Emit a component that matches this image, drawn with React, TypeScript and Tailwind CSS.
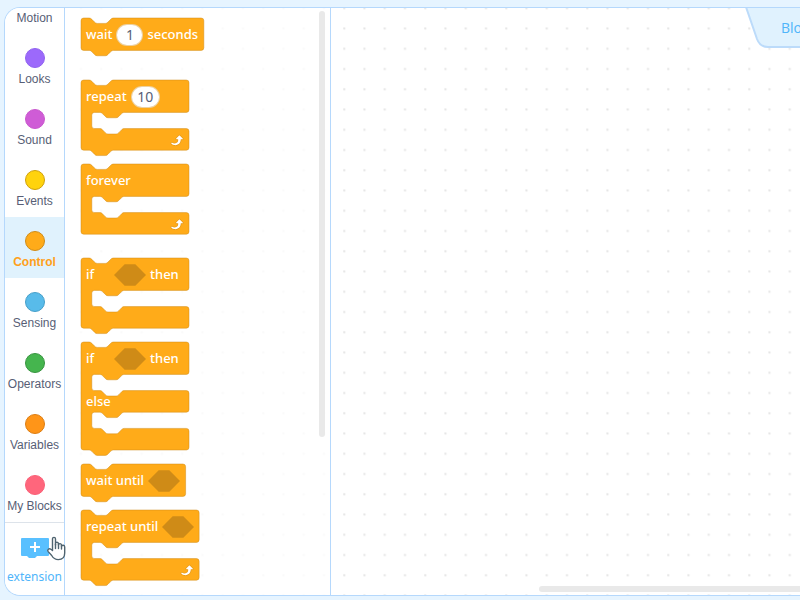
import { ReactNode, useState } from 'react';

const NOTCH_IN = 'c2,0 3,1 4,2 l4,4 c1,1 2,2 4,2 h12 c2,0 3,-1 4,-2 l4,-4 c1,-1 2,-2 4,-2';
const NOTCH_OUT = 'c-2,0 -3,1 -4,2 l-4,4 c-1,1 -2,2 -4,2 h-12 c-2,0 -3,-1 -4,-2 l-4,-4 c-1,-1 -2,-2 -4,-2';
const MOUTH = `H64 ${NOTCH_OUT} h-8 a4,4 0 0,0 -4,4 v16 a4,4 0 0,0 4,4 h8 ${NOTCH_IN}`;

// Outline of a block in grid units; `arms` are the heights of the bars below each mouth.
function outline(width: number, arms: number[], cap: boolean) {
  const right = width - 4;
  let d = `M0,4 A4,4 0 0,1 4,0 H12 ${NOTCH_IN} H${right} a4,4 0 0,1 4,4 v40 a4,4 0 0,1 -4,4 `;
  for (const arm of arms) {
    d += `${MOUTH} H${right} a4,4 0 0,1 4,4 v${arm - 8} a4,4 0 0,1 -4,4 `;
  }
  if (!cap) d += `H48 ${NOTCH_OUT} `;
  return d + 'H4 a4,4 0 0,1 -4,-4 z';
}

function LoopArrow() {
  return (
    <svg viewBox="0 0 24 24" className="size-4" aria-hidden="true">
      <path
        fill="#cf8b17"
        fillOpacity="0.6"
        d="M23.3,11c-0.3,0.6-0.9,1-1.5,1h-1.6c-0.1,1.3-0.5,2.5-1.1,3.6c-0.9,1.7-2.3,3.2-4.1,4.1c-1.7,0.9-3.6,1.2-5.5,0.9c-1.8-0.3-3.5-1.1-4.9-2.3c-0.7-0.7-0.7-1.9,0-2.6c0.6-0.6,1.6-0.7,2.3-0.2H7c0.9,0.6,1.9,0.9,2.9,0.9s1.9-0.3,2.7-0.9c1.1-0.8,1.8-2.1,1.8-3.5h-1.5c-0.9,0-1.7-0.7-1.7-1.7c0-0.4,0.2-0.9,0.5-1.2l4.4-4.4c0.7-0.6,1.7-0.6,2.4,0L23,9.2C23.5,9.7,23.6,10.4,23.3,11z"
      />
      <path
        fill="#fff"
        d="M21.8,11h-2.6c0,1.5-0.3,2.9-1,4.2c-0.8,1.6-2.1,2.8-3.7,3.6c-1.5,0.8-3.3,1.1-4.9,0.8c-1.6-0.2-3.2-1-4.4-2.1c-0.4-0.3-0.4-0.9-0.1-1.2c0.3-0.4,0.9-0.4,1.2-0.1l0,0c1,0.7,2.2,1.1,3.4,1.1s2.3-0.3,3.3-1c0.9-0.6,1.6-1.5,2-2.6c0.3-0.9,0.4-1.8,0.2-2.8h-2.4c-0.4,0-0.7-0.3-0.7-0.7c0-0.2,0.1-0.3,0.2-0.4l4.4-4.4c0.3-0.3,0.7-0.3,0.9,0L22,9.8c0.3,0.3,0.4,0.6,0.3,0.9S22,11,21.8,11z"
      />
    </svg>
  );
}

function Hexagon() {
  return (
    <svg viewBox="0 0 48 32" className="h-[22px] w-8 shrink-0" aria-hidden="true">
      <path d="M16,0 H32 L48,16 32,32 H16 L0,16 z" fill="#cf8b17" />
    </svg>
  );
}

function NumberSlot({ value, label }: { value: string; label: string }) {
  return (
    <input
      aria-label={label}
      defaultValue={value}
      className={`h-[22px] rounded-full border border-[#cf8b17]/40 bg-white text-center text-sm font-normal text-[#575e75] outline-none ${
        value.length > 1 ? 'w-[29px]' : 'w-[27px]'
      }`}
    />
  );
}

type BlockProps = {
  width: number;
  arms?: number[];
  cap?: boolean;
  loop?: boolean;
  otherwise?: string;
  className?: string;
  children: ReactNode;
};

function Block({ width, arms = [], cap = false, loop = false, otherwise, className = '', children }: BlockProps) {
  const units = 48 + arms.reduce((sum, arm) => sum + arm + 24, 0);
  return (
    <div className={`relative w-fit ${className}`}>
      <svg
        className="absolute top-0 left-0 overflow-visible"
        width={width * 0.675}
        height={units * 0.675}
        viewBox={`0 0 ${width} ${units}`}
        aria-hidden="true"
      >
        <path d={outline(width, arms, cap)} fill="#ffab19" stroke="#cf8b17" strokeOpacity="0.7" />
      </svg>
      <div className="relative" style={{ width: width * 0.675 }}>
        <div className="flex h-[33px] items-center gap-1 pl-[5px]">{children}</div>
        {arms.map((_, i) => (
          <div key={i} className="flex h-[38px] items-end justify-end pr-[5px] pb-[3px]">
            {otherwise && i === 0 && <span className="mr-auto pb-px pl-[5px] leading-4">{otherwise}</span>}
            {loop && <LoopArrow />}
          </div>
        ))}
      </div>
    </div>
  );
}

const categories = [
  { name: 'Motion', color: 'border-[#4280d7] bg-[#4c97ff]' },
  { name: 'Looks', color: 'border-[#9063f0] bg-[#9c69fb]' },
  { name: 'Sound', color: 'border-[#c957cd] bg-[#cf5cd6]' },
  { name: 'Events', color: 'border-[#cfa00c] bg-[#ffd30d]' },
  { name: 'Control', color: 'border-[#cf8b17] bg-[#ffab19]' },
  { name: 'Sensing', color: 'border-[#469fc9] bg-[#58bbea]' },
  { name: 'Operators', color: 'border-[#389440] bg-[#45b54e]' },
  { name: 'Variables', color: 'border-[#dc7d12] bg-[#ff9518]' },
  { name: 'My Blocks', color: 'border-[#fa6077] bg-[#ff667c]' },
];

function HandCursor() {
  return (
    <svg
      viewBox="0 0 18 25"
      className="pointer-events-none absolute top-[13px] left-[42px] h-[25px] w-[18px] overflow-visible"
      fill="#fff"
      stroke="#4f6470"
      strokeWidth="1.4"
      strokeLinejoin="round"
      strokeLinecap="round"
      aria-hidden="true"
    >
      <path d="M5.5,14.5 V3 C5.5,0.8 8.5,0.8 8.5,3 V9 V7.5 C8.5,5.6 11.5,5.8 11.5,7.8 V9 C11.8,7 14.5,7.4 14.5,9.2 V10.2 C15,8.6 17.7,9 17.7,11 V17 C17.7,21.5 15,23.6 11.3,23.6 C7.5,23.6 6,21.8 4.7,19.5 L1.2,15.6 C-0.2,13.8 2.2,12 3.8,13.2 z" />
      <path d="M8.5,8 V12.5 M11.5,8.5 V12.5 M14.5,9.8 V13" fill="none" />
    </svg>
  );
}

export default function App() {
  const [active, setActive] = useState('Control');
  return (
    <div className="h-screen min-h-[400px] overflow-hidden bg-[#e6f4ff] pt-[7px] pb-1 pl-1">
      <main className="relative flex h-full overflow-hidden rounded-l-2xl border border-r-0 border-[#b5d8fc] bg-white font-['Liberation_Sans',Arial,sans-serif]">
        <svg className="absolute inset-0 size-full" aria-hidden="true">
          <defs>
            <pattern id="grid" x="6.25" y="10.5" width="20.25" height="20.25" patternUnits="userSpaceOnUse">
              <rect x="8" y="9" width="2" height="2" fill="#e4e4e4" />
            </pattern>
          </defs>
          <rect width="100%" height="100%" fill="url(#grid)" />
        </svg>

        <nav className="relative z-10 flex w-[60px] shrink-0 flex-col border-r border-[#b5d8fc] bg-white" aria-label="Categories">
          <div className="flex min-h-0 flex-1 flex-col justify-end overflow-hidden">
            {categories.map(({ name, color }) => (
              <button
                key={name}
                onClick={() => setActive(name)}
                className={`flex h-[61px] w-full shrink-0 flex-col items-center gap-[3px] pt-[14px] text-xs leading-4 whitespace-nowrap ${
                  active === name ? 'bg-[#e0f2fd] font-bold text-[#ffa01a]' : 'text-[#575e75]'
                }`}
              >
                <span className={`size-5 shrink-0 rounded-full border ${color}`} />
                {name}
              </button>
            ))}
          </div>
          <button className="relative flex h-[73px] w-full shrink-0 flex-col items-center border-t border-[#dde3ea] pt-[15px] font-['Noto_Sans',sans-serif] text-xs leading-4 text-[#4fb5fa]">
            <svg viewBox="0 0 28 21" className="mb-[10px] h-[21px] w-7 shrink-0" aria-hidden="true">
              <path d="M1,0 H27 Q28,0 28,1 V17 Q28,18 27,18 H16 L14,20 H8 L6,18 H1 Q0,18 0,17 V1 Q0,0 1,0 z" fill="#59c0ff" />
              <path d="M14,4 V14 M9,9 H19" stroke="#fff" strokeWidth="2" />
            </svg>
            extension
            <HandCursor />
          </button>
        </nav>

        <section
          className="relative w-[266px] shrink-0 overflow-hidden border-r border-[#b5d8fc] bg-white/80 font-['Noto_Sans','Open_Sans',sans-serif] text-[13px] font-medium text-white"
          aria-label="Blocks palette"
        >
          <div className="flex flex-col gap-[13px] pt-[10px] pl-4">
            <Block width={182}>
              wait <NumberSlot value="1" label="Seconds to wait" /> seconds
            </Block>
            <Block width={160} arms={[32]} loop className="mt-4">
              repeat <NumberSlot value="10" label="Times to repeat" />
            </Block>
            <Block width={160} arms={[32]} loop cap>
              forever
            </Block>
            <Block width={160} arms={[32]} className="mt-[10px]">
              <span className="w-6">if</span> <Hexagon /> then
            </Block>
            <Block width={160} arms={[32, 32]} otherwise="else">
              <span className="w-6">if</span> <Hexagon /> then
            </Block>
            <Block width={155}>
              wait until <Hexagon />
            </Block>
            <Block width={175} arms={[32]} loop>
              repeat until <Hexagon />
            </Block>
          </div>
          <div className="absolute top-[3px] right-[5px] h-[426px] w-[6px] rounded-full bg-[#e9e9e9]" />
        </section>

        <section className="relative min-w-0 flex-1 overflow-hidden" aria-label="Workspace">
          <button className="absolute top-0 right-0 h-10 w-[56px] pl-[37px] text-left font-['Open_Sans',sans-serif] text-sm whitespace-nowrap text-[#4fb5fa]">
            <svg viewBox="0 0 56 40" className="absolute inset-0 h-10 w-[56px]" aria-hidden="true">
              <path d="M2,-1 L13,31 Q16,39 24,39 H60 V-1 z" fill="#e0f2fe" stroke="#bcdbfa" strokeWidth="2" />
            </svg>
            <span className="relative">Blocks</span>
          </button>
          <div className="absolute right-0 bottom-[3px] left-[208px] h-[6px] rounded-l-full bg-[#e9e9e9]" />
        </section>
      </main>
    </div>
  );
}
